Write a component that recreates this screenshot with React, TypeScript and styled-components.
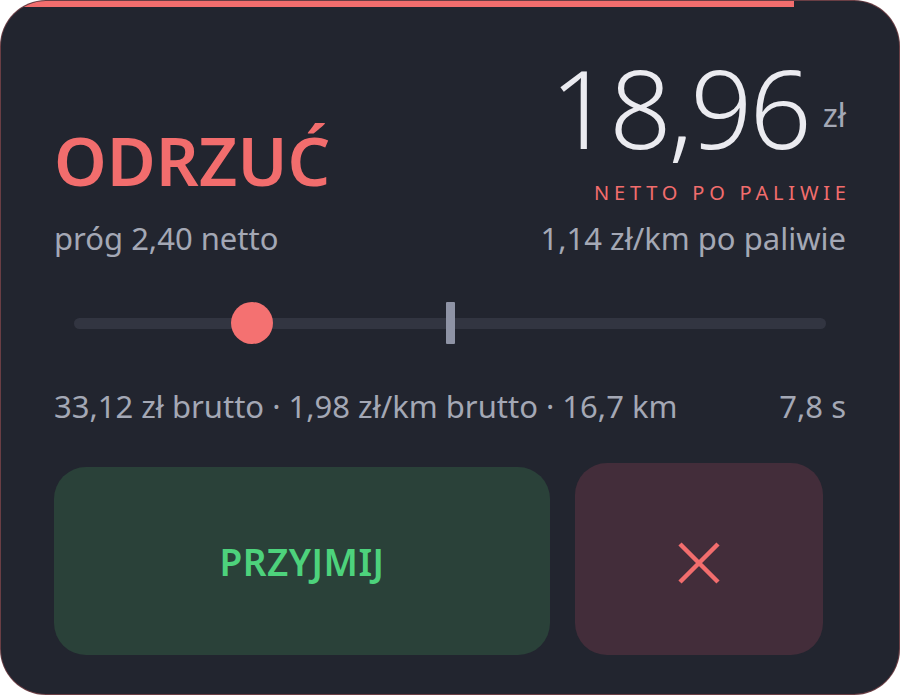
import React from 'react';
import styled, { createGlobalStyle } from 'styled-components';

const GlobalStyle = createGlobalStyle`
  html, body {
    margin: 0;
    padding: 0;
    background: #ffffff;
  }
  body {
    font-family: 'Noto Sans', 'Open Sans', sans-serif;
  }
`;

const Card = styled.div`
  position: relative;
  width: 900px;
  height: 695px;
  box-sizing: border-box;
  background-color: #22252f;
  border: 1px solid rgba(242, 109, 109, 0.35);
  border-radius: 46px;
  overflow: hidden;
`;

const TimerBar = styled.div`
  height: 6px;
  background-color: #f26d6d;
`;

const Content = styled.div`
  padding: 45px 53px 0 53px;
  display: flex;
  flex-direction: column;
`;

const Header = styled.div`
  display: flex;
  justify-content: space-between;
  align-items: flex-end;
`;

const Verdict = styled.div`
  font-size: 67px;
  line-height: 1;
  font-weight: 600;
  color: #f26d6d;
  margin-bottom: 9px;
`;

const AmountBlock = styled.div`
  display: flex;
  flex-direction: column;
  align-items: flex-end;
`;

const AmountRow = styled.div`
  display: flex;
  align-items: baseline;
  gap: 14px;
`;

const Amount = styled.span`
  font-size: 109px;
  line-height: 1;
  font-weight: 300;
  color: #ebebf0;
  letter-spacing: -3px;
`;

const Currency = styled.span`
  font-size: 32px;
  line-height: 1;
  color: #a4a8b5;
  position: relative;
  top: -22px;
`;

const NetLabel = styled.div`
  margin-top: 22px;
  font-size: 20px;
  line-height: 1;
  letter-spacing: 4.8px;
  margin-right: -4.8px;
  color: #f26d6d;
`;

const InfoRow = styled.div<{ $top: number }>`
  display: flex;
  justify-content: space-between;
  margin-top: ${(p) => p.$top}px;
  font-size: 31px;
  line-height: 1;
  color: #a4a8b5;
`;

const Slider = styled.div`
  position: relative;
  margin: 48px 20px 0 20px;
  height: 42px;
  display: flex;
  align-items: center;
`;

const Track = styled.div`
  flex: 1;
  height: 11px;
  border-radius: 6px;
  background-color: #323541;
`;

const Thumb = styled.div`
  position: absolute;
  top: 0;
  width: 42px;
  height: 42px;
  margin-left: -21px;
  border-radius: 50%;
  background-color: #f47171;
`;

const Threshold = styled.div`
  position: absolute;
  top: 0;
  width: 9px;
  height: 42px;
  margin-left: -4px;
  border-radius: 1px;
  background-color: #8e93a5;
`;

const Actions = styled.div`
  display: flex;
  align-items: flex-end;
  gap: 25px;
  margin-top: 41px;
  height: 192px;
`;

const ActionButton = styled.button<{ $variant: 'accept' | 'reject' }>`
  border: none;
  display: flex;
  align-items: center;
  justify-content: center;
  font-family: inherit;
  cursor: pointer;
  border-radius: 32px;
  width: ${(p) => (p.$variant === 'accept' ? '496px' : '248px')};
  height: ${(p) => (p.$variant === 'accept' ? '188px' : '192px')};
  background-color: ${(p) => (p.$variant === 'accept' ? '#2a4139' : '#432d3a')};
  color: ${(p) => (p.$variant === 'accept' ? '#4dd27c' : '#f26d6d')};
  font-size: 37px;
  font-weight: 600;
  letter-spacing: 0.5px;
  padding: 0;
`;

const CloseIcon = styled.svg`
  width: 44px;
  height: 44px;
  margin-top: 8px;
`;

const App: React.FC = () => {
  const progress = 88.3;
  const thumbPos = 23.7;
  const thresholdPos = 50;

  return (
    <>
      <GlobalStyle />
      <Card>
        <TimerBar style={{ width: `${progress}%` }} />
        <Content>
          <Header>
            <Verdict>ODRZUĆ</Verdict>
            <AmountBlock>
              <AmountRow>
                <Amount>18,96</Amount>
                <Currency>zł</Currency>
              </AmountRow>
              <NetLabel>NETTO PO PALIWIE</NetLabel>
            </AmountBlock>
          </Header>
          <InfoRow $top={20}>
            <span>próg 2,40 netto</span>
            <span>1,14 zł/km po paliwie</span>
          </InfoRow>
          <Slider>
            <Track />
            <Threshold style={{ left: `${thresholdPos}%` }} />
            <Thumb style={{ left: `${thumbPos}%` }} />
          </Slider>
          <InfoRow $top={47}>
            <span>33,12 zł brutto · 1,98 zł/km brutto · 16,7 km</span>
            <span>7,8 s</span>
          </InfoRow>
          <Actions>
            <ActionButton $variant="accept">PRZYJMIJ</ActionButton>
            <ActionButton $variant="reject" aria-label="Odrzuć">
              <CloseIcon viewBox="0 0 44 44" fill="none">
                <path
                  d="M3 3L41 41M41 3L3 41"
                  stroke="#f26d6d"
                  strokeWidth="4.5"
                />
              </CloseIcon>
            </ActionButton>
          </Actions>
        </Content>
      </Card>
    </>
  );
};

export default App;
